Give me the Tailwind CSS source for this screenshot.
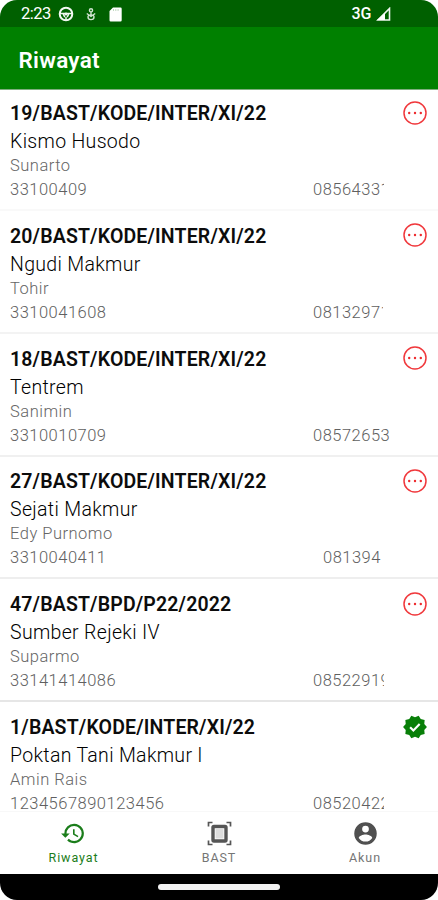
<!DOCTYPE html>
<html lang="id">
<head>
  <meta charset="UTF-8" />
  <title>Riwayat</title>
  <meta name="viewport" content="width=device-width, initial-scale=1" />
  <script src="https://cdn.jsdelivr.net/npm/@tailwindcss/browser@4"></script>
</head>
<body class="bg-white font-['Roboto',sans-serif]">

  <div class="w-[438px] h-[900px] flex flex-col overflow-hidden rounded-[17px] bg-white">

    <!-- Status bar -->
    <div class="h-[27px] shrink-0 bg-[#006000] text-white flex items-center pl-[21px] pr-[47px] pt-px">
      <span class="text-[16.5px] leading-none w-[31px] whitespace-nowrap tracking-[-0.5px]">2:23</span>
      <svg class="w-4 h-4 ml-[6px]" viewBox="0 0 16 16" fill="none" stroke="#f2f7f2">
        <circle cx="8" cy="8" r="6.3" stroke-width="2" />
        <path d="M2 7.5h12M5 7.5l1.8 3.6M11 7.5l-1.8 3.6M8 11v3" stroke-width="1.5" />
        <circle cx="8" cy="8" r="1.6" fill="#f2f7f2" stroke="none" />
      </svg>
      <svg class="w-3 h-[14px] ml-[11px]" viewBox="0 0 12 14" fill="none" stroke="#cfe3cf" stroke-width="1.4">
        <circle cx="6" cy="3.3" r="1.6" />
        <path d="M6 5v3.5M1.8 6.5L6 9.500l4.200-3M6 8.500c-2-.8-3 .3-3 1.500 0 1.700 1.500 2.600 3 2.600s3-.9 3-2.600c0-1.200-1-2.300-3-1.500z" />
      </svg>
      <svg class="w-[13px] h-[15px] ml-[12px]" viewBox="0 0 13 15">
        <path d="M4 .5h7.500a1.200 1.200 0 0 1 1.200 1.200v11.600a1.200 1.200 0 0 1-1.200 1.200H1.700a1.200 1.200 0 0 1-1.200-1.200V4z" fill="#fff" />
        <path d="M4.500 2v2M6.800 2v2M9.100 2v2" stroke="#b9d2b9" stroke-width=".9" />
      </svg>
      <span class="text-[16px] font-medium leading-none ml-auto tracking-[-0.3px]">3G</span>
      <svg class="w-[15px] h-[14px] ml-[5px]" viewBox="0 0 15 14">
        <path d="M13.500 1.500v11.500H2z" fill="none" stroke="#eef5ee" stroke-width="1.6" />
        <path d="M9 6v7H1z" fill="#fff" />
      </svg>
    </div>

    <!-- App bar -->
    <header class="h-[63px] shrink-0 bg-[#008000] border-b border-[#7fae7f] flex items-center pl-[18.5px] pt-[3px]">
      <h1 class="text-[22.5px] leading-7 font-semibold tracking-[0.3px] text-white">Riwayat</h1>
    </header>

    <!-- List -->
    <main id="list" class="flex-1 min-h-0 overflow-hidden"></main>

    <!-- Bottom navigation -->
    <nav class="h-[63px] shrink-0 bg-white border-t border-[#f8f8f8] grid grid-cols-3 text-[#757575]">
      <div class="flex flex-col items-center pt-[8px] text-[#1b7d1b]">
        <svg class="w-[26px] h-[27px]" viewBox="0 0 24 24" fill="currentColor">
          <path d="M13 3a9 9 0 0 0-9 9H1l3.890 3.890.07.140L9 12H6a7 7 0 1 1 7 7 6.970 6.970 0 0 1-4.930-2.060L6.650 18.350A9 9 0 1 0 13 3zm-1 5v5l4.280 2.540.720-1.210-3.500-2.080V8z" />
        </svg>
        <span class="text-[12.5px] leading-4 mt-[3px] ml-px tracking-[0.9px]">Riwayat</span>
      </div>
      <div class="flex flex-col items-center pt-[8px]">
        <svg class="w-[27px] h-[27px]" viewBox="0 0 27 27" fill="none" stroke="#555">
          <path d="M2.500 6.500v-4h4M20.500 2.500h4v4M24.500 20.500v4h-4M6.500 24.500h-4v-4" stroke-width="1.700" />
          <rect x="7" y="6.500" width="13" height="14.500" rx="1" stroke-width="3.400" />
          <rect x="9.500" y="8.500" width="8" height="10" fill="#ddd" stroke="none" />
        </svg>
        <span class="text-[12.5px] leading-4 mt-[3px] tracking-[0.9px]">BAST</span>
      </div>
      <div class="flex flex-col items-center pt-[8px]">
        <svg class="w-[27px] h-[27px] text-[#505050]" viewBox="0 0 24 24" fill="currentColor">
          <path d="M12 2a10 10 0 1 0 0 20 10 10 0 0 0 0-20zm0 3a3 3 0 1 1 0 6 3 3 0 0 1 0-6zm0 14.200a7.200 7.200 0 0 1-6-3.220c.03-1.990 4-3.080 6-3.080s5.970 1.090 6 3.080a7.200 7.200 0 0 1-6 3.220z" />
        </svg>
        <span class="text-[12.5px] leading-4 mt-[3px] tracking-[0.9px]">Akun</span>
      </div>
    </nav>

    <!-- Gesture bar -->
    <div class="h-[26px] shrink-0 bg-black flex justify-center pt-[10px]">
      <div class="w-[122px] h-[6px] rounded-full bg-[#f2f2f2]"></div>
    </div>
  </div>

  <script>
    const items = [
      { kode: '19/BAST/KODE/INTER/XI/22', nama: 'Kismo Husodo', ketua: 'Sunarto', id: '33100409', telp: '08564331', telpClass: 'w-[71px] mr-[54px]', line: 'border-[#f9f9f9]' },
      { kode: '20/BAST/KODE/INTER/XI/22', nama: 'Ngudi Makmur', ketua: 'Tohir', id: '3310041608', telp: '08132971', telpClass: 'w-[70px] mr-[55px]', line: 'border-[#f3f3f3]' },
      { kode: '18/BAST/KODE/INTER/XI/22', nama: 'Tentrem', ketua: 'Sanimin', id: '3310010709', telp: '08572653', telpClass: 'w-[80px] mr-[45px]', line: 'border-[#f0f0f0]' },
      { kode: '27/BAST/KODE/INTER/XI/22', nama: 'Sejati Makmur', ketua: 'Edy Purnomo', id: '3310040411', telp: '081394', telpClass: 'w-[70px] mr-[45px]', line: 'border-[#eeeeee]' },
      { kode: '47/BAST/BPD/P22/2022', nama: 'Sumber Rejeki IV', ketua: 'Suparmo', id: '33141414086', telp: '08522919', telpClass: 'w-[71px] mr-[54px]', line: 'border-[#e6e6e6]' },
      { kode: '1/BAST/KODE/INTER/XI/22', nama: 'Poktan Tani Makmur I', ketua: 'Amin Rais', id: '1234567890123456', telp: '08520422', telpClass: 'w-[71px] mr-[54px]', line: 'border-white', ok: true }
    ];

    const pendingIcon = `
      <svg class="w-6 h-6 mb-[3px]" viewBox="0 0 24 24" fill="none">
        <circle cx="12" cy="12" r="11" stroke="#f0383c" stroke-width="1.5" />
        <g fill="#ee2a2e"><circle cx="6.200" cy="12" r="1.200" /><circle cx="12" cy="12" r="1.200" /><circle cx="17.800" cy="12" r="1.200" /></g>
      </svg>`;

    const okIcon = `
      <svg class="w-[26px] h-[26px] -mr-px mb-[2px]" viewBox="0 0 24 24">
        <path fill="#087f08" d="M23 12l-2.440-2.780.340-3.680-3.610-.820-1.890-3.180L12 3 8.600 1.540 6.710 4.720l-3.610.810.340 3.680L1 12l2.440 2.780-.340 3.690 3.610.820 1.890 3.180L12 21l3.400 1.460 1.890-3.180 3.610-.820-.340-3.680z" />
        <path d="M7.500 12.200l3 3 5.800-5.900" fill="none" stroke="#fff" stroke-width="2" />
      </svg>`;

    document.getElementById('list').innerHTML = items.map((item, i) => `
      <div class="${i === 0 ? 'h-[121px]' : 'h-[122.8px]'} flex flex-col justify-end pb-[7px] border-b-2 ${item.line}">
        <div class="flex items-center justify-between pl-[10px] pr-[11px] h-6 mb-1">
          <span class="text-[19.5px] leading-6 font-semibold text-[#0c0c0c] tracking-[0.16px]">${item.kode}</span>
          ${item.ok ? okIcon : pendingIcon}
        </div>
        <div class="pl-[10px] text-[19.5px] leading-6 font-light text-black tracking-[0.32px]">${item.nama}</div>
        <div class="pl-[10px] text-[16.5px] leading-6 font-light text-[#666666] tracking-[0.5px]">${item.ketua}</div>
        <div class="flex justify-between pl-[10px] text-[16.5px] leading-6 font-light text-[#606060] tracking-[0.5px]">
          <span>${item.id}</span>
          <span class="${item.telpClass} overflow-hidden whitespace-nowrap">${item.telp}</span>
        </div>
      </div>`).join('');
  </script>
</body>
</html>
